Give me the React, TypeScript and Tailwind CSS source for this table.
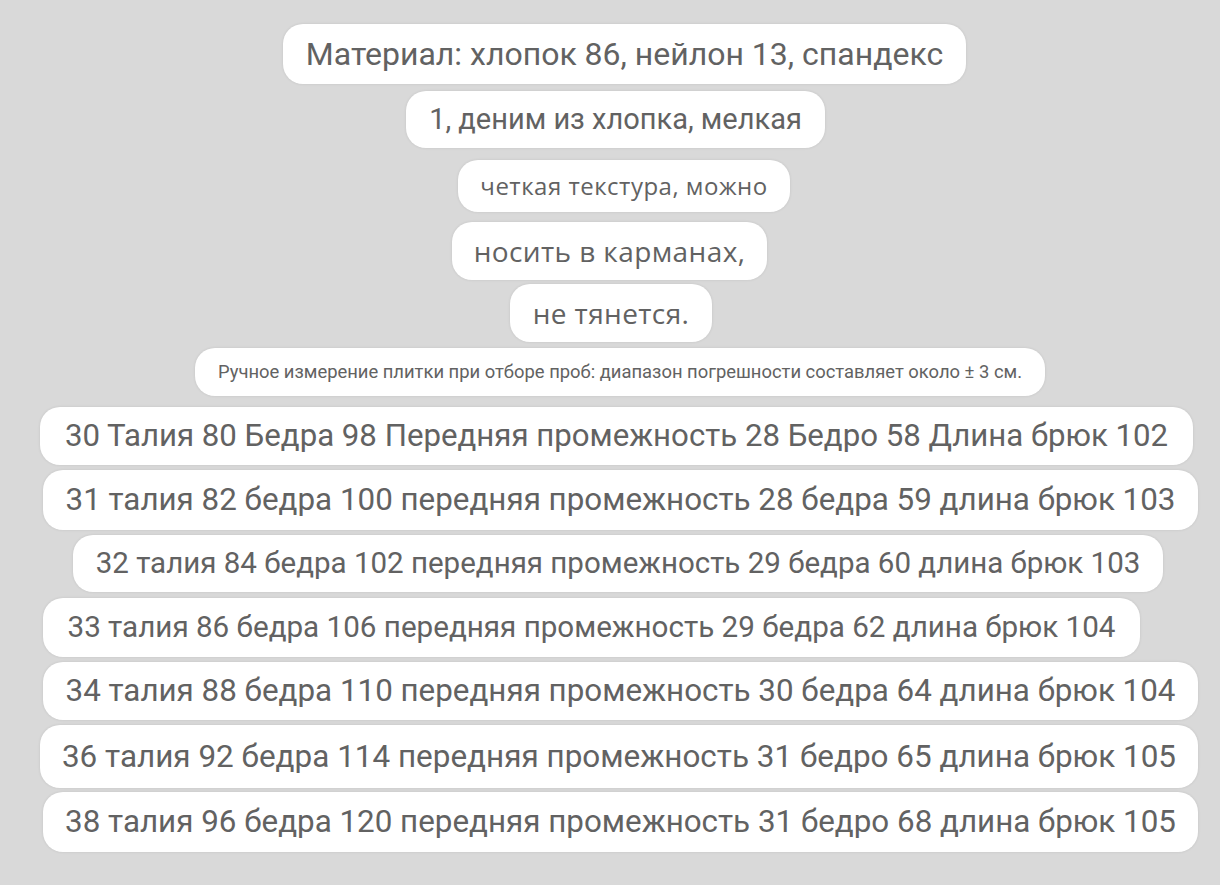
import React from "react";

type P = { t: string; x: number; w: number; mt: number; h: number; cls: string };

const main = "font-['Roboto',sans-serif]";
const wide = "font-['Open_Sans',sans-serif]";

const pills: P[] = [
  { t: "Материал: хлопок 86, нейлон 13, спандекс", x: 283, w: 683, mt: 24, h: 60, cls: main + " text-[32px]" },
  { t: "1, деним из хлопка, мелкая", x: 406, w: 419, mt: 7, h: 57, cls: main + " text-[29px]" },
  { t: "четкая текстура, можно", x: 458, w: 332, mt: 12, h: 52, cls: wide + " text-[24px] tracking-[0.5px]" },
  { t: "носить в карманах,", x: 452, w: 315, mt: 10, h: 58, cls: wide + " text-[28px] tracking-[0.4px]" },
  { t: "не тянется.", x: 510, w: 202, mt: 4, h: 58, cls: wide + " text-[28px] tracking-[0.4px]" },
  { t: "Ручное измерение плитки при отборе проб: диапазон погрешности составляет около ± 3 см.", x: 195, w: 850, mt: 6, h: 48, cls: main + " text-[18.4px]" },
  { t: "30 Талия 80 Бедра 98 Передняя промежность 28 Бедро 58 Длина брюк 102", x: 40, w: 1153, mt: 11, h: 58, cls: main + " text-[31.2px]" },
  { t: "31 талия 82 бедра 100 передняя промежность 28 бедра 59 длина брюк 103", x: 43, w: 1155, mt: 5, h: 60, cls: main + " text-[31.35px]" },
  { t: "32 талия 84 бедра 102 передняя промежность 29 бедра 60 длина брюк 103", x: 73, w: 1090, mt: 5, h: 57, cls: main + " text-[29.5px]" },
  { t: "33 талия 86 бедра 106 передняя промежность 29 бедра 62 длина брюк 104", x: 43, w: 1097, mt: 6, h: 59, cls: main + " text-[29.6px]" },
  { t: "34 талия 88 бедра 110 передняя промежность 30 бедра 64 длина брюк 104", x: 43, w: 1155, mt: 5, h: 58, cls: main + " text-[31.35px]" },
  { t: "36 талия 92 бедра 114 передняя промежность 31 бедро 65 длина брюк 105", x: 40, w: 1158, mt: 5, h: 63, cls: main + " text-[31.45px]" },
  { t: "38 талия 96 бедра 120 передняя промежность 31 бедро 68 длина брюк 105", x: 43, w: 1155, mt: 4, h: 60, cls: main + " text-[31.35px]" },
];

export default function App() {
  return (
    <div className="w-[1220px] h-[885px] bg-[#d9d9d9] flex flex-col overflow-hidden">
      {pills.map((p, i) => (
        <div
          key={i}
          style={{ marginLeft: p.x, width: p.w, height: p.h, marginTop: p.mt }}
          className={
            "shrink-0 bg-white rounded-[20px] shadow-[0_0_3px_rgba(0,0,0,0.10)] flex items-center justify-center whitespace-nowrap text-[#626262] leading-none " +
            p.cls
          }
        >
          {p.t}
        </div>
      ))}
    </div>
  );
}
